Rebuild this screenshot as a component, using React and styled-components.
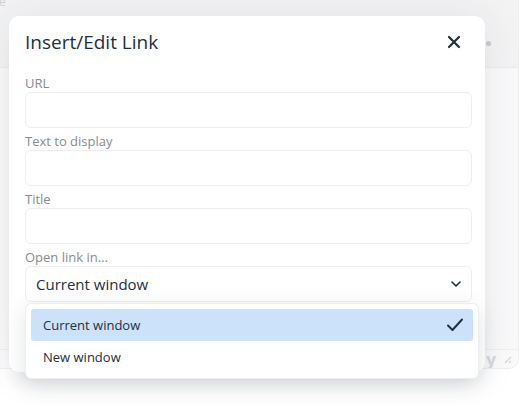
import React from 'react';
import styled, { createGlobalStyle } from 'styled-components';

const GlobalStyle = createGlobalStyle`
    html, body {
        margin: 0;
        padding: 0;
        background: #ffffff;
    }
    * {
        box-sizing: border-box;
    }
`;

const fields = ['URL', 'Text to display', 'Title'];
const targets = ['Current window', 'New window'];

const App = () => {
    const [target, setTarget] = React.useState('Current window');

    return (
        <Page>
            <GlobalStyle />
            <Editor>
                <Toolbar>
                    <Faint>e</Faint>
                    <MoreDot />
                </Toolbar>
                <Content />
                <StatusBar>
                    <Brand>y</Brand>
                    <Grip width="10" height="10" viewBox="0 0 10 10">
                        <path d="M9 3 L3 9 M9 7 L7 9" stroke="#d4d6d9" strokeWidth="1.2" fill="none" />
                    </Grip>
                </StatusBar>
            </Editor>

            <Dialog>
                <Header>
                    <Title>Insert/Edit Link</Title>
                    <Close aria-label="Close">
                        <svg width="14" height="14" viewBox="0 0 14 14">
                            <path d="M2 2 L12 12 M12 2 L2 12" stroke="#222f3e" strokeWidth="2.2" strokeLinecap="round" />
                        </svg>
                    </Close>
                </Header>
                <Body>
                    {fields.map((field) => (
                        <Field key={field}>
                            <Label>{field}</Label>
                            <Input type="text" />
                        </Field>
                    ))}
                    <Field>
                        <Label>Open link in...</Label>
                        <Select>
                            <span>{target}</span>
                            <svg width="12" height="8" viewBox="0 0 12 8">
                                <path d="M2 2 L6 6 L10 2" stroke="#222f3e" strokeWidth="1.6" fill="none" strokeLinecap="round" strokeLinejoin="round" />
                            </svg>
                        </Select>
                    </Field>
                </Body>
            </Dialog>

            <Menu>
                {targets.map((item) => (
                    <MenuItem key={item} active={item === target} onClick={() => setTarget(item)}>
                        <span>{item}</span>
                        {item === target && (
                            <svg width="18" height="16" viewBox="0 0 18 16">
                                <path d="M2 8.5 L6.5 13 L16 2.5" stroke="#222f3e" strokeWidth="2" fill="none" strokeLinecap="round" strokeLinejoin="round" />
                            </svg>
                        )}
                    </MenuItem>
                ))}
            </Menu>
        </Page>
    );
};

const Page = styled.div`
    position: relative;
    width: 527px;
    height: 418px;
    overflow: hidden;
    background: #ffffff;
    font-family: "Open Sans", "Noto Sans", sans-serif;
`;

const Editor = styled.div`
    display: flex;
    flex-direction: column;
    width: 531px;
    height: 369px;
    margin-left: -12px;
    border: 1px solid #eeeff1;
    border-top: none;
    border-radius: 0 0 10px 0;
    background: #f8f8f9;
    overflow: hidden;
`;

const Toolbar = styled.div`
    position: relative;
    height: 68px;
    background: #f3f3f4;
    border-bottom: 1px solid #ececee;
`;

const Faint = styled.span`
    position: absolute;
    left: 10px;
    top: -5px;
    font-size: 12px;
    line-height: 14px;
    color: #d2d4d7;
`;

const MoreDot = styled.span`
    position: absolute;
    left: 497px;
    top: 41px;
    width: 5px;
    height: 5px;
    border-radius: 50%;
    background: #c8c9cc;
`;

const Content = styled.div`
    flex: 1;
    background: #f9f9fa;
`;

const StatusBar = styled.div`
    display: flex;
    align-items: center;
    justify-content: flex-end;
    gap: 6px;
    height: 19px;
    padding-right: 6px;
    border-top: 1px solid #efeff1;
    background: #fafafb;
`;

const Brand = styled.span`
    font-size: 17px;
    font-weight: 700;
    color: #d8dadd;
    line-height: 1;
`;

const Grip = styled.svg`
    display: block;
`;

const Dialog = styled.div`
    position: absolute;
    left: 9px;
    top: 16px;
    width: 476px;
    height: 356px;
    background: #ffffff;
    border-radius: 10px;
    box-shadow: 0 16px 16px -10px rgba(34, 47, 62, 0.12), 0 0 40px 1px rgba(34, 47, 62, 0.08);
    display: flex;
    flex-direction: column;
`;

const Header = styled.div`
    display: flex;
    align-items: flex-start;
    justify-content: space-between;
    height: 58px;
    padding: 11px 18px 0 16px;
`;

const Title = styled.h1`
    margin: 0;
    font-size: 19px;
    font-weight: 400;
    line-height: 30px;
    color: #222f3e;
`;

const Close = styled.button`
    display: flex;
    align-items: center;
    justify-content: center;
    width: 26px;
    height: 28px;
    margin-top: 1px;
    padding: 0;
    border: none;
    background: transparent;
    cursor: pointer;
`;

const Body = styled.div`
    display: flex;
    flex-direction: column;
    gap: 4px;
    padding: 0 13px 0 16px;
`;

const Field = styled.div`
    display: flex;
    flex-direction: column;
`;

const Label = styled.label`
    font-size: 13px;
    line-height: 18px;
    color: #878c93;
`;

const Input = styled.input`
    height: 36px;
    border: 1px solid #eceef0;
    border-radius: 6px;
    outline: none;
    padding: 0 10px;
    font-family: inherit;
    font-size: 16px;
    color: #222f3e;
`;

const Select = styled.div`
    display: flex;
    align-items: center;
    justify-content: space-between;
    height: 36px;
    padding: 0 9px 0 10px;
    border: 1px solid #eceef0;
    border-radius: 6px;
    font-size: 15px;
    color: #222f3e;
`;

const Menu = styled.div`
    position: absolute;
    left: 25px;
    top: 303px;
    width: 454px;
    display: flex;
    flex-direction: column;
    padding: 5px;
    background: #ffffff;
    border: 1px solid #eceef0;
    border-radius: 6px;
    box-shadow: 0 6px 22px rgba(34, 47, 62, 0.13);
`;

const MenuItem = styled.div`
    display: flex;
    align-items: center;
    justify-content: space-between;
    height: 32px;
    padding: 0 9px 0 12px;
    border-radius: 3px;
    font-size: 13px;
    color: #222f3e;
    background: ${(p) => (p.active ? '#cce2fa' : 'transparent')};
    cursor: pointer;
`;

export default App;
